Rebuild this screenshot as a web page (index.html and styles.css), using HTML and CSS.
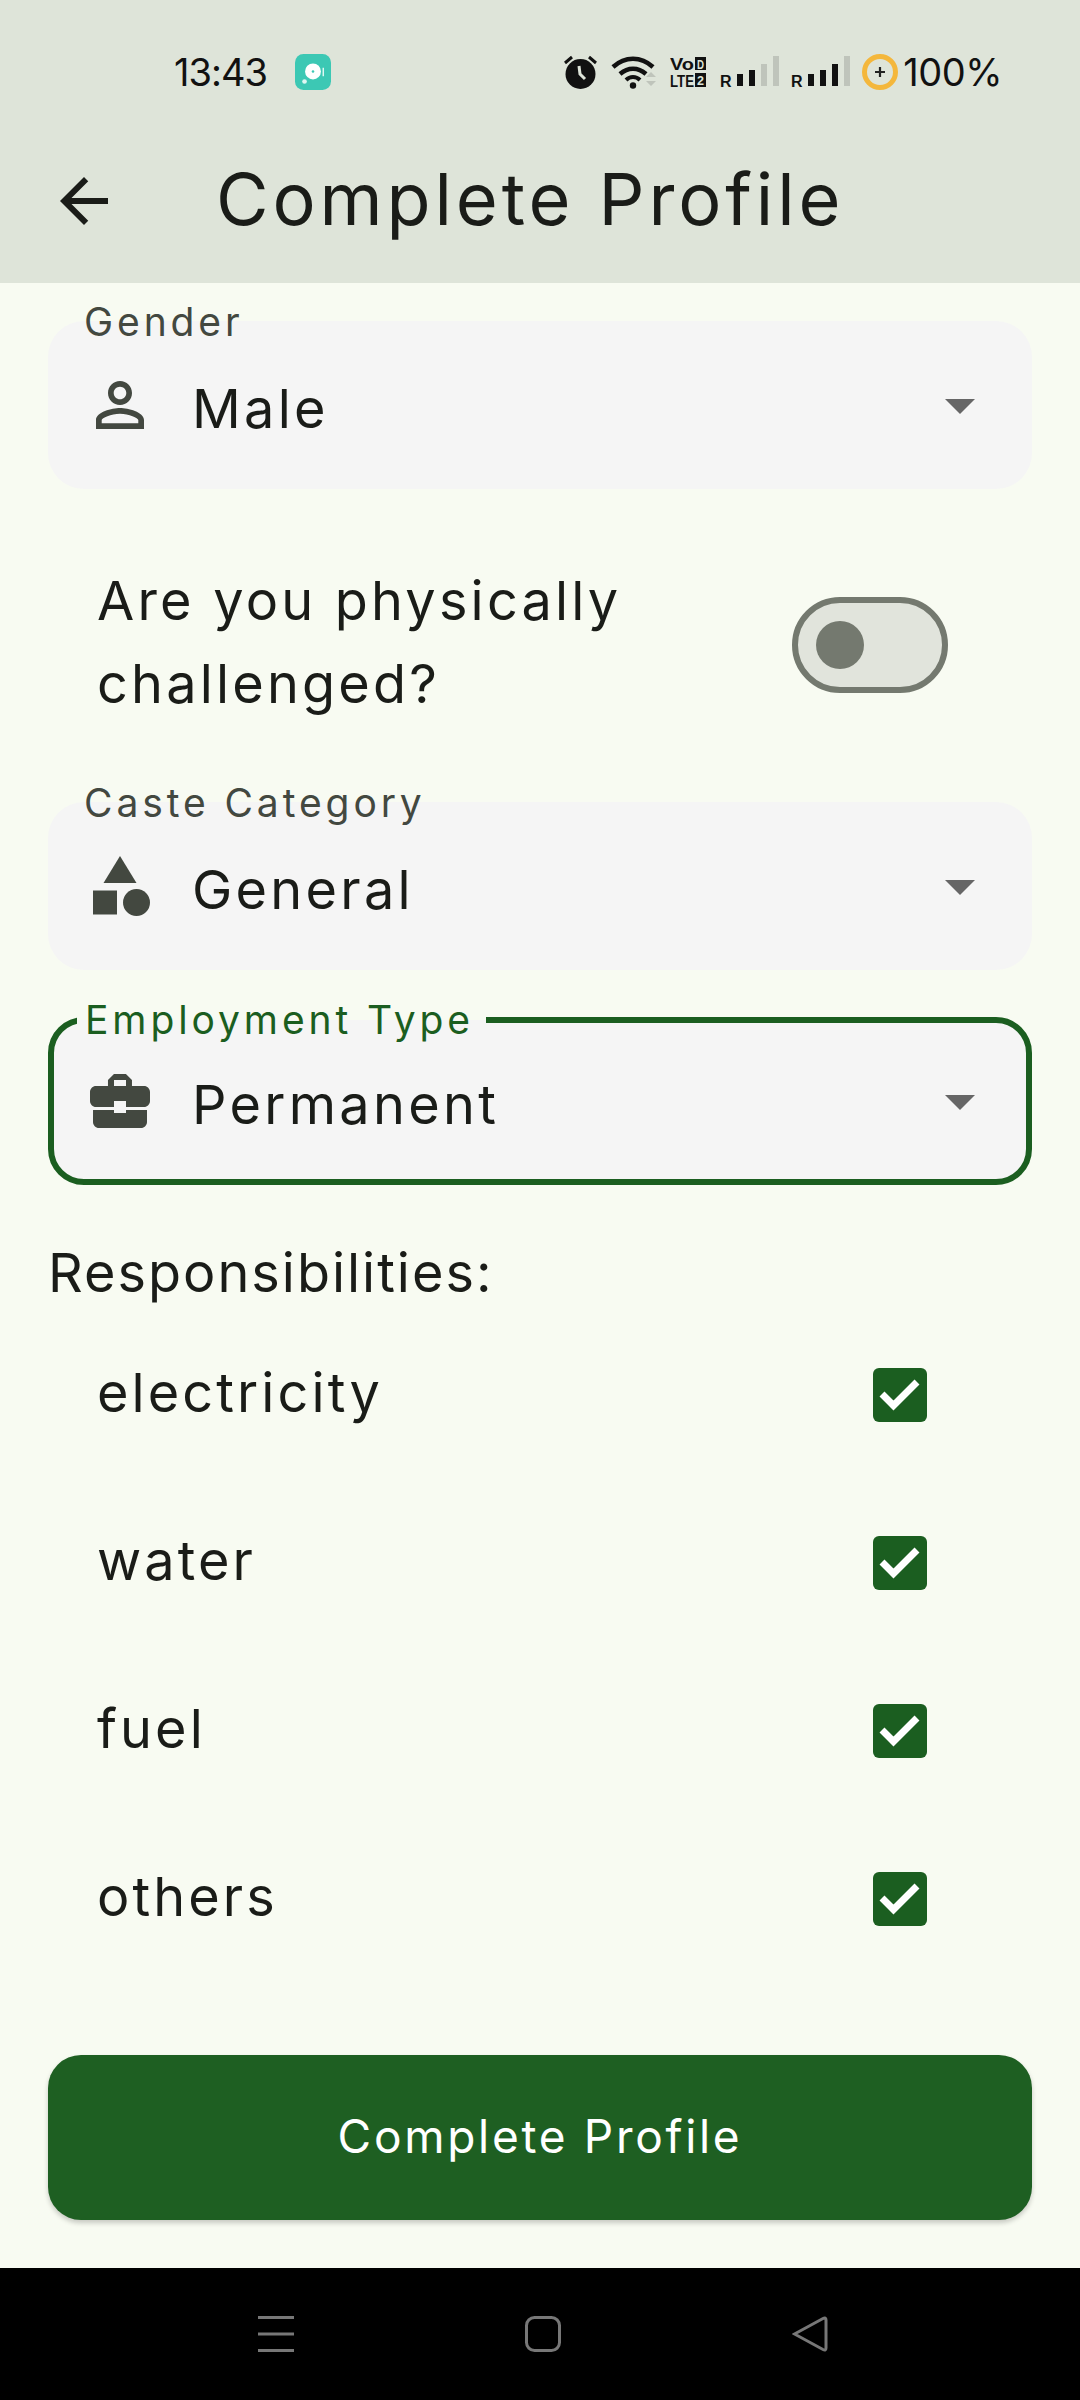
FILE: index.html
```html
<!DOCTYPE html>
<html lang="en">
<head>
    <meta charset="UTF-8">
    <meta name="viewport" content="width=device-width, initial-scale=1.0">
    <title>Complete Profile</title>

    <link rel="stylesheet" href="styles.css">

</head>
<body>

    <header class="top">

        <div class="status">
            <span class="time">13:43</span>
            <svg class="app-dot" width="36" height="36" viewBox="0 0 34 34">
                <rect width="34" height="34" rx="8" fill="#3cc8b4"/>
                <circle cx="17" cy="16.500" r="7.500" fill="#fff"/>
                <circle cx="17" cy="16.500" r="1.200" fill="#3cc8b4"/>
                <circle cx="9" cy="26" r="2.200" fill="#dff7f3"/>
                <rect x="26" y="13" width="1.400" height="8" fill="#dff7f3"/>
            </svg>

            <div class="status-right">
                <svg class="ic-alarm" width="33" height="34" viewBox="0 0 33 34">
                    <circle cx="16.500" cy="19" r="15" fill="#111"/>
                    <path d="M1 8l7-6M32 8l-7-6" stroke="#111" stroke-width="3" fill="none"/>
                    <path d="M15 11l1 8 5 5" stroke="#dee4d9" stroke-width="3" fill="none"/>
                </svg>
                <svg class="ic-wifi" width="47" height="34" viewBox="0 0 47 34">
                    <path d="M2 12c12-11 28-11 40 0" stroke="#111" stroke-width="4.500" fill="none"/>
                    <path d="M9 19c8-7 18-7 26 0" stroke="#111" stroke-width="4.500" fill="none"/>
                    <path d="M15 25c4-4 10-4 14 0" stroke="#111" stroke-width="4" fill="none"/>
                    <circle cx="22" cy="30.500" r="3.200" fill="#111"/>
                    <path d="M35 22l5-5 5 5zM35 26l5 5 5-5z" fill="#bfc4bb"/>
                </svg>
                <svg class="ic-volte" width="37" height="37" viewBox="0 -3 37 37">
                    <text class="volte-text" x="0" y="13" textLength="24" lengthAdjust="spacingAndGlyphs">Vo</text>
                    <rect x="25" y="0" width="11" height="13" fill="#111"/>
                    <text class="volte-text inv" x="27" y="11.500" textLength="7" lengthAdjust="spacingAndGlyphs">D</text>
                    <text class="volte-text" x="0" y="30" textLength="24" lengthAdjust="spacingAndGlyphs">LTE</text>
                    <rect x="25" y="16" width="11" height="14" fill="#111"/>
                    <text class="volte-text inv" x="27" y="28" textLength="7" lengthAdjust="spacingAndGlyphs">2</text>
                </svg>
                <svg class="ic-signal" width="60" height="38" viewBox="0 -3 60 38">
                    <text class="signal-r" x="0" y="30.500">R</text>
                    <rect x="17" y="18" width="6" height="12" fill="#111"/>
                    <rect x="29" y="14" width="6" height="16" fill="#111"/>
                    <rect x="41" y="8" width="6" height="22" fill="#bfc4bb"/>
                    <rect x="53" y="0" width="6" height="30" fill="#bfc4bb"/>
                </svg>
                <svg class="ic-signal" width="60" height="38" viewBox="0 -3 60 38">
                    <text class="signal-r" x="0" y="30.500">R</text>
                    <rect x="17" y="18" width="6" height="12" fill="#111"/>
                    <rect x="29" y="14" width="6" height="16" fill="#111"/>
                    <rect x="41" y="8" width="6" height="22" fill="#111"/>
                    <rect x="53" y="0" width="6" height="30" fill="#bfc4bb"/>
                </svg>
                <svg class="ic-batt" width="36" height="36" viewBox="0 0 36 36">
                    <circle cx="18" cy="18" r="15.500" stroke="#f4b73c" stroke-width="5" fill="none"/>
                    <path d="M13 18h10M18 13v10" stroke="#222" stroke-width="2.200"/>
                </svg>
                <span class="percent">100%</span>
            </div>
        </div>

        <div class="appbar">
            <svg class="back" width="72" height="72" viewBox="0 0 24 24">
                <path d="M20 11H7.830l5.590-5.590L12 4l-8 8 8 8 1.410-1.410L7.830 13H20v-2z"/>
            </svg>
            <h1>Complete Profile</h1>
        </div>

    </header>

    <main class="form">

        <div class="field">
            <label class="field-label">Gender</label>
            <svg class="field-icon" width="72" height="72" viewBox="0 0 24 24">
                <path d="M12 5.900c1.160 0 2.100.94 2.100 2.100s-.94 2.100-2.100 2.100S9.900 9.160 9.900 8s.94-2.100 2.100-2.100m0 9c2.970 0 6.100 1.460 6.100 2.100v1.100H5.900V17c0-.64 3.130-2.100 6.100-2.100M12 4C9.790 4 8 5.790 8 8s1.790 4 4 4 4-1.790 4-4-1.790-4-4-4zm0 9c-2.670 0-8 1.340-8 4v3h16v-3c0-2.660-5.330-4-8-4z"/>
            </svg>
            <span class="field-value">Male</span>
            <svg class="caret" width="72" height="72" viewBox="0 0 24 24"><path d="M7 10l5 5 5-5z"/></svg>
        </div>

        <div class="switch-row">
            <span class="switch-text">Are you physically challenged?</span>
            <span class="switch"><span class="knob"></span></span>
        </div>

        <div class="field">
            <label class="field-label">Caste Category</label>
            <svg class="field-icon" width="72" height="72" viewBox="0 0 24 24">
                <path d="M12 2l-5.500 9h11z"/>
                <circle cx="17.500" cy="17.500" r="4.500"/>
                <path d="M3 13.500h8v8H3z"/>
            </svg>
            <span class="field-value">General</span>
            <svg class="caret" width="72" height="72" viewBox="0 0 24 24"><path d="M7 10l5 5 5-5z"/></svg>
        </div>

        <div class="field focused">
            <label class="field-label">Employment Type</label>
            <svg class="field-icon" width="72" height="72" viewBox="0 0 24 24">
                <path d="M10 16v-1H3.010L3 19c0 1.110.89 2 2 2h14c1.110 0 2-.89 2-2v-4h-7v1h-4zm10-9h-4.010V5l-2-2h-4l-2 2v2H4c-1.100 0-2 .9-2 2v3c0 1.110.89 2 2 2h6v-2h4v2h6c1.100 0 2-.9 2-2V9c0-1.100-.9-2-2-2zm-6 0h-4V5h4v2z"/>
            </svg>
            <span class="field-value">Permanent</span>
            <svg class="caret" width="72" height="72" viewBox="0 0 24 24"><path d="M7 10l5 5 5-5z"/></svg>
        </div>

        <h2 class="section-title">Responsibilities:</h2>

        <ul class="checks">
            <li class="check-row">
                <span class="check-text">electricity</span>
                <span class="checkbox"><svg width="54" height="54" viewBox="0 0 54 54"><path d="M9 26l11.500 11.500L44 14" stroke="#fff" stroke-width="7" fill="none"/></svg></span>
            </li>
            <li class="check-row">
                <span class="check-text">water</span>
                <span class="checkbox"><svg width="54" height="54" viewBox="0 0 54 54"><path d="M9 26l11.500 11.500L44 14" stroke="#fff" stroke-width="7" fill="none"/></svg></span>
            </li>
            <li class="check-row">
                <span class="check-text">fuel</span>
                <span class="checkbox"><svg width="54" height="54" viewBox="0 0 54 54"><path d="M9 26l11.500 11.500L44 14" stroke="#fff" stroke-width="7" fill="none"/></svg></span>
            </li>
            <li class="check-row">
                <span class="check-text">others</span>
                <span class="checkbox"><svg width="54" height="54" viewBox="0 0 54 54"><path d="M9 26l11.500 11.500L44 14" stroke="#fff" stroke-width="7" fill="none"/></svg></span>
            </li>
        </ul>

        <button class="submit">Complete Profile</button>

    </main>

    <nav class="navbar">
        <svg width="36" height="36" viewBox="0 0 36 36">
            <path d="M0 1.500h36M0 18h36M0 34.500h36" stroke="#777" stroke-width="3"/>
        </svg>
        <svg width="36" height="36" viewBox="0 0 36 36">
            <rect x="1.500" y="1.500" width="33" height="33" rx="8" stroke="#777" stroke-width="3" fill="none"/>
        </svg>
        <svg width="36" height="36" viewBox="0 0 36 36">
            <path d="M2.500 18L31 2.500q3-1.500 3 1.500v28q0 3-3 1.500z" stroke="#777" stroke-width="3" fill="none"/>
        </svg>
    </nav>

</body>
</html>
```

FILE: styles.css
```css
* {
    box-sizing: border-box;
}

body {
    margin: 0;
    width: 1080px;
    height: 2400px;
    display: flex;
    flex-direction: column;
    background-color: #f8fbf2;
    color: #1a1c18;
    font-family: Inter, "Open Sans", sans-serif;
}

svg {
    display: block;
    flex-shrink: 0;
}

/* status bar + app bar */
.top {
    height: 283px;
    background-color: #dee4d9;
}

.status {
    height: 144px;
    display: flex;
    align-items: center;
    padding: 0 78px 0 174px;
    color: #111;
}

.time {
    font-size: 38px;
    letter-spacing: -1px;
    width: 121px;
}

.status-right {
    margin-left: auto;
    display: flex;
    align-items: center;
}

.ic-alarm { margin-right: 14px; }
.ic-wifi { margin-right: 12px; }
.ic-volte { margin-right: 13px; }
.ic-signal { margin-right: 11px; }
.ic-batt { margin-right: 5px; }

.volte-text {
    font-family: "Liberation Sans", sans-serif;
    font-size: 16px;
    font-weight: bold;
    fill: #111;
}

.volte-text.inv {
    font-size: 12px;
    fill: #dee4d9;
}

.signal-r {
    font-family: "Liberation Sans", sans-serif;
    font-size: 16px;
    font-weight: bold;
    fill: #111;
}

.percent {
    font-size: 38px;
    letter-spacing: -0.5px;
}

.appbar {
    height: 139px;
    display: flex;
    align-items: center;
    padding: 0 0 30px 48px;
}

.back {
    fill: #1a1c18;
    margin-top: 4px;
}

.appbar h1 {
    margin: 0 0 0 96px;
    font-size: 72px;
    font-weight: 400;
    letter-spacing: 3.9px;
    line-height: 1;
}

/* form */
.form {
    flex: 1;
    padding: 38px 48px 48px;
    display: flex;
    flex-direction: column;
}

.field {
    position: relative;
    height: 168px;
    display: flex;
    align-items: center;
    padding: 0 36px 0 36px;
    background-color: #f5f5f5;
    border-radius: 36px;
}

.field.focused {
    margin-top: 47px;
    border: 6px solid #1b5e20;
    padding: 0 30px 0 30px;
}

.field-label {
    position: absolute;
    left: 36px;
    top: -21px;
    line-height: 44px;
    font-size: 39px;
    letter-spacing: 3.9px;
    color: #434840;
}

.focused .field-label {
    left: 23px;
    top: -25px;
    padding: 0 12px 0 8px;
    background: linear-gradient(#f8fbf2 50%, #f5f5f5 50%);
    color: #1b5e20;
}

.field-icon {
    fill: #434840;
}

.field-value {
    margin-left: 36px;
    padding-top: 6px;
    font-size: 54px;
    letter-spacing: 3.3px;
}

.caret {
    margin-left: auto;
    fill: #666;
}

.switch-row {
    height: 313px;
    padding: 0 84px 0 49px;
    display: flex;
    align-items: center;
    justify-content: space-between;
}

.switch-text {
    width: 600px;
    margin-top: -7px;
    font-size: 54px;
    letter-spacing: 3.2px;
    line-height: 83px;
}

.switch {
    width: 156px;
    height: 96px;
    margin-bottom: 2px;
    display: flex;
    align-items: center;
    padding-left: 18px;
    background-color: #e1e4dc;
    border: 6px solid #74796f;
    border-radius: 48px;
}

.knob {
    width: 48px;
    height: 48px;
    border-radius: 50%;
    background-color: #74796f;
}

.section-title {
    margin: 50px 0 0;
    font-size: 54px;
    font-weight: 400;
    letter-spacing: 2px;
    line-height: 76px;
}

.checks {
    margin: 0;
    padding: 0;
    list-style: none;
}

.check-row {
    height: 168px;
    padding: 0 105px 0 49px;
    display: flex;
    align-items: center;
    justify-content: space-between;
    font-size: 54px;
    letter-spacing: 3.1px;
}

.check-text {
    padding-bottom: 5px;
}

.checkbox {
    width: 54px;
    height: 54px;
    background-color: #1b5e20;
    border-radius: 6px;
}

.submit {
    margin-top: auto;
    height: 165px;
    padding-bottom: 4px;
    border: 0;
    border-radius: 33px;
    background-color: #1e5f22;
    box-shadow: 0 3px 5px rgba(0, 0, 0, 0.2);
    color: #fff;
    font-family: inherit;
    font-size: 46px;
    letter-spacing: 2.7px;
}

/* android nav */
.navbar {
    height: 132px;
    background-color: #000;
    display: flex;
    align-items: center;
    gap: 231px;
    padding-left: 258px;
}
```
